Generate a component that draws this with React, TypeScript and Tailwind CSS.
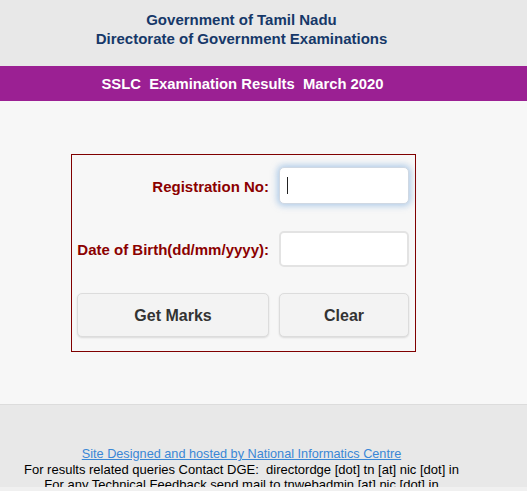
import React from "react";

export default function App() {
  const font = { fontFamily: '"Liberation Sans", Arial, sans-serif' };
  return (
    <div className="w-[527px] h-[491px] overflow-hidden bg-[#e8e8e8]" style={font}>
      <header className="bg-[#e8e8e8] h-[66px] pt-[10px]">
        <div className="w-[483px] text-center text-[15px] leading-[19px] font-bold text-[#163869]">
          <div>Government of Tamil Nadu</div>
          <div>Directorate of Government Examinations</div>
        </div>
      </header>
      <div className="bg-[#9b2093] h-[35px] flex items-center">
        <div className="w-[485px] text-center text-[14.8px] font-bold text-white whitespace-pre pt-px">
          {"SSLC  Examination Results  March 2020"}
        </div>
      </div>
      <main className="bg-[#f7f7f7] h-[304px] border-b border-[#dcdcdc] pt-[53px]">
        <div className="ml-[71px] w-[345px] h-[198px] border border-[#800000] pt-[12px] pl-[5px] pr-[6px]">
          <div className="grid grid-cols-[192px_130px] gap-x-[10px]">
            <label className="flex items-center justify-end text-[15px] font-bold text-[#8b0000] h-[37px] pt-[3px]">
              Registration No:
            </label>
            <div className="h-[37px] rounded-[5px] bg-white border border-[#cfd8e3] shadow-[0_0_6px_2px_rgba(120,170,220,0.55)] flex items-center pl-[7px]">
              <div className="w-px h-[17px] bg-[#222]" />
            </div>
            <label className="mt-[27px] flex items-center justify-end text-[15px] font-bold text-[#8b0000] h-[36px] pt-[2px]">
              Date of Birth(dd/mm/yyyy):
            </label>
            <div className="mt-[27px] h-[36px] rounded-[5px] bg-white border-2 border-[#e3e3e3]" />
            <button className="mt-[26px] h-[44px] pt-px rounded-[5px] bg-[#f3f3f3] border border-[#dcdcdc] shadow-[0_1px_2px_rgba(0,0,0,0.12)] text-[16px] font-bold text-[#333]">
              Get Marks
            </button>
            <button className="mt-[26px] h-[44px] pt-px rounded-[5px] bg-[#f3f3f3] border border-[#dcdcdc] shadow-[0_1px_2px_rgba(0,0,0,0.12)] text-[16px] font-bold text-[#333]">
              Clear
            </button>
          </div>
        </div>
      </main>
      <footer className="bg-[#e8e8e8] h-[82px] overflow-hidden pt-[41px]">
        <div className="w-[483px] text-center text-[13px] leading-[15px] text-black">
          <div>
            <a className="text-[12.7px] text-[#3a87d6] underline">Site Designed and hosted by National Informatics Centre</a>
          </div>
          <div className="whitespace-pre">{"For results related queries Contact DGE:  directordge [dot] tn [at] nic [dot] in"}</div>
          <div>For any Technical Feedback send mail to tnwebadmin [at] nic [dot] in</div>
        </div>
      </footer>
      <div className="h-[4px] bg-[#f0f0f0]" />
    </div>
  );
}
